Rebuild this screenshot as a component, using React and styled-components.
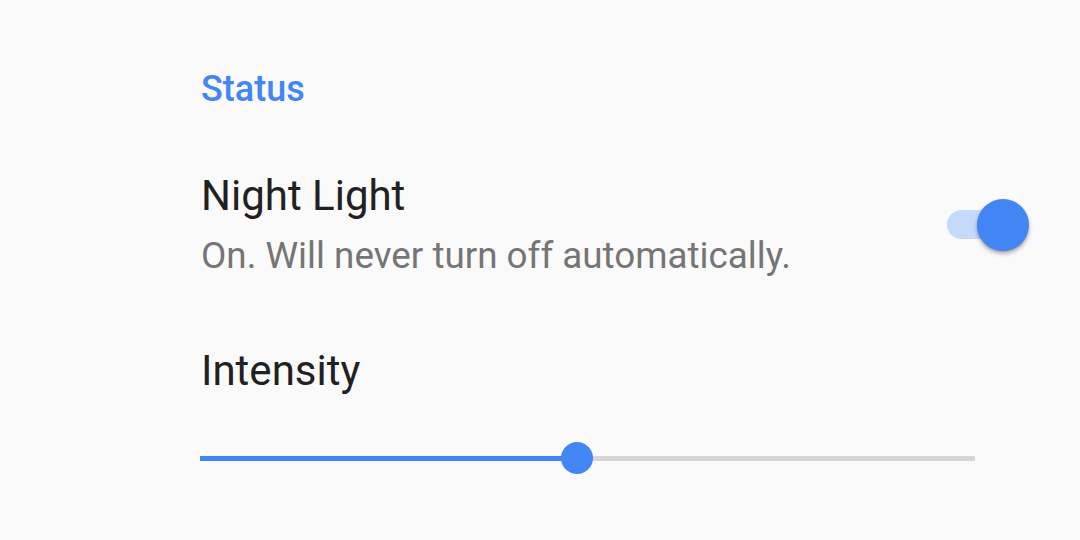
import React, { useState } from "react";
import styled, { createGlobalStyle } from "styled-components";

const GlobalStyle = createGlobalStyle`
  html, body {
    margin: 0;
    padding: 0;
    background: #fafafa;
    font-family: Roboto, "Noto Sans", sans-serif;
  }
`;

const Page = styled.div`
  width: 1080px;
  height: 540px;
  box-sizing: border-box;
  padding: 67px 50px 0 201px;
  display: flex;
  flex-direction: column;
`;

const SectionTitle = styled.div`
  color: #4285f4;
  font-size: 36px;
  font-weight: 500;
  line-height: 44px;
`;

const Row = styled.div`
  display: flex;
  align-items: center;
  justify-content: space-between;
  margin-top: ${(p) => p.$top || 0}px;
`;

const Texts = styled.div`
  display: flex;
  flex-direction: column;
`;

const Title = styled.div`
  color: #212121;
  font-size: 42px;
  line-height: 52px;
  margin-top: ${(p) => p.$top || 0}px;
`;

const Summary = styled.div`
  color: #757575;
  font-size: 36.8px;
  line-height: 44px;
  margin-top: 12px;
`;

const Switch = styled.button`
  position: relative;
  width: 84px;
  height: 52px;
  padding: 0;
  border: 0;
  background: none;
  cursor: pointer;
  margin-top: 2px;
  margin-right: -1px;
`;

const SwitchTrack = styled.span`
  position: absolute;
  left: 0;
  top: 11px;
  width: 68px;
  height: 29px;
  border-radius: 15px;
  background: ${(p) => (p.$on ? "#c5d9fb" : "#bdbdbd")};
`;

const SwitchThumb = styled.span`
  position: absolute;
  top: 0;
  left: ${(p) => (p.$on ? 30 : 0)}px;
  width: 52px;
  height: 52px;
  border-radius: 50%;
  background: ${(p) => (p.$on ? "#4285f4" : "#f1f1f1")};
  box-shadow: 0 3px 4px rgba(0, 0, 0, 0.28), 0 1px 2px rgba(0, 0, 0, 0.15);
`;

const Slider = styled.div`
  position: relative;
  width: 775px;
  height: 32px;
  margin: 45px 0 0 -1px;
  display: flex;
  align-items: center;
`;

const SliderTrack = styled.div`
  width: 100%;
  height: 5px;
  background: #d6d6d6;
  display: flex;
`;

const SliderFill = styled.div`
  height: 100%;
  background: #4285f4;
`;

const SliderThumb = styled.div`
  position: absolute;
  top: 0;
  width: 32px;
  height: 32px;
  margin-left: -16px;
  border-radius: 50%;
  background: #4285f4;
`;

export default function App() {
  const [on, setOn] = useState(true);
  const intensity = 0.487;

  return (
    <>
      <GlobalStyle />
      <Page>
        <SectionTitle>Status</SectionTitle>
        <Row $top={59}>
          <Texts>
            <Title>Night Light</Title>
            <Summary>On. Will never turn off automatically.</Summary>
          </Texts>
          <Switch onClick={() => setOn(!on)} aria-pressed={on}>
            <SwitchTrack $on={on} />
            <SwitchThumb $on={on} />
          </Switch>
        </Row>
        <Title $top={67}>Intensity</Title>
        <Slider>
          <SliderTrack>
            <SliderFill style={{ width: `${intensity * 100}%` }} />
          </SliderTrack>
          <SliderThumb style={{ left: `${intensity * 100}%` }} />
        </Slider>
      </Page>
    </>
  );
}
